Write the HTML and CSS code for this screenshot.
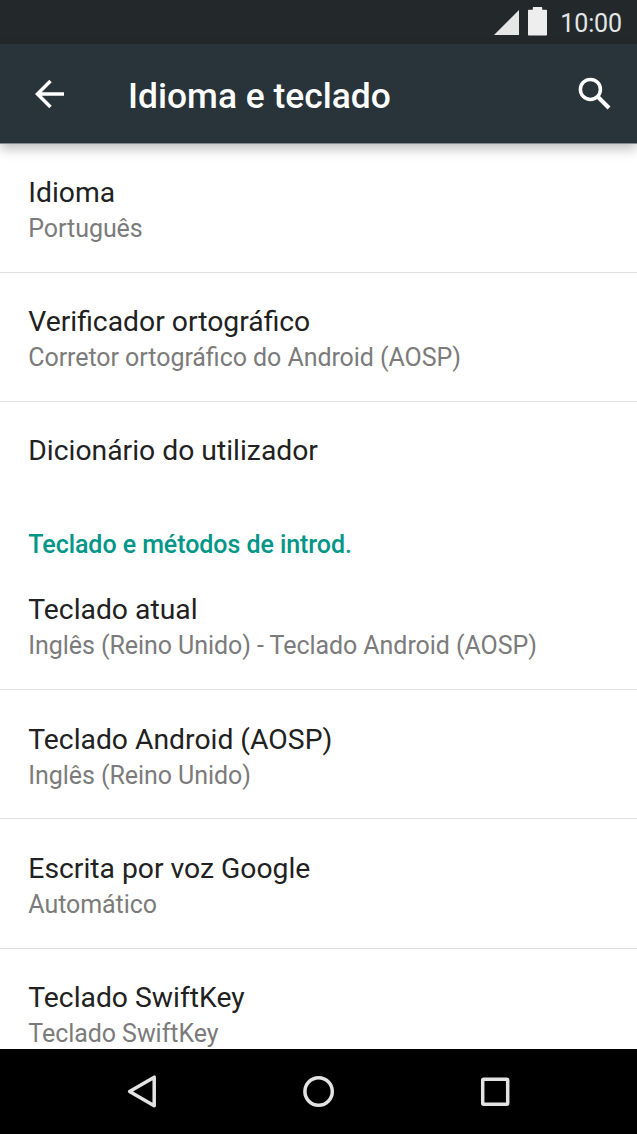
FILE: index.html
```html
<!DOCTYPE html>
<html lang="pt">
<head>
<meta charset="utf-8">
<title>Idioma e teclado</title>
<link rel="stylesheet" href="styles.css">
</head>
<body>
<div class="screen">
  <div class="status-bar">
    <svg class="signal" width="25" height="25" viewBox="0 0 25 25"><path d="M0 25L25 0V25Z" fill="#e6e6e6"/></svg>
    <svg class="battery" width="19" height="29" viewBox="0 0 19 29"><path d="M0 3.5q0-.7.7-.7H4.8V.6q0-.6.6-.6H13.6q.6 0 .6.6V2.8H18.3q.7 0 .7.7V27.8q0 .7-.7.7H.7q-.7 0-.7-.7Z" fill="#eee"/></svg>
    <span class="clock">10:00</span>
  </div>
  <header class="app-bar">
    <svg class="back" width="30" height="30" viewBox="0 0 30 30"><path d="M29 15H3M15.5 2L2.5 15L15.5 28" fill="none" stroke="#fff" stroke-width="3.5"/></svg>
    <h1 class="title">Idioma e teclado</h1>
    <svg class="search" width="34" height="34" viewBox="0 0 34 34" fill="none" stroke="#fff"><circle cx="12.4" cy="12.4" r="10" stroke-width="3.5"/><path d="M19.5 19.5L31 31" stroke-width="4"/></svg>
  </header>
  <main class="list">
    <div class="row"><div class="name">Idioma</div><div class="summary">Português</div></div>
    <div class="row"><div class="name">Verificador ortográfico</div><div class="summary">Corretor ortográfico do Android (AOSP)</div></div>
    <div class="row single"><div class="name">Dicionário do utilizador</div></div>
    <h2 class="category">Teclado e métodos de introd.</h2>
    <div class="row"><div class="name">Teclado atual</div><div class="summary">Inglês (Reino Unido) - Teclado Android (AOSP)</div></div>
    <div class="row"><div class="name">Teclado Android (AOSP)</div><div class="summary">Inglês (Reino Unido)</div></div>
    <div class="row"><div class="name">Escrita por voz Google</div><div class="summary">Automático</div></div>
    <div class="row"><div class="name">Teclado SwiftKey</div><div class="summary">Teclado SwiftKey</div></div>
  </main>
  <nav class="nav-bar">
    <svg width="36" height="36" viewBox="0 0 36 36"><path d="M28.2 3.2V31.8L3.6 17.5Z"/></svg>
    <svg width="36" height="36" viewBox="0 0 36 36"><circle cx="17.6" cy="17.5" r="13.7"/></svg>
    <svg width="36" height="36" viewBox="0 0 36 36"><rect x="5.7" y="5.2" width="25" height="25" rx="1"/></svg>
  </nav>
</div>
</body>
</html>
```
FILE: styles.css
```css
* { box-sizing: border-box; }

body {
  margin: 0;
  font-family: Roboto, "Liberation Sans", sans-serif;
}

.screen {
  width: 637px;
  height: 1134px;
  display: flex;
  flex-direction: column;
  overflow: hidden;
  background: #fff;
}

.status-bar {
  flex: none;
  height: 44px;
  padding: 7px 15px 0 0;
  display: flex;
  justify-content: flex-end;
  align-items: flex-start;
  background: #23282b;
}

.signal { margin: 3px 9px 0 0; }
.battery { margin-right: 13px; }

.clock {
  font-size: 25px;
  letter-spacing: -0.1px;
  line-height: 33px;
  color: #e3e5e6;
}

.app-bar {
  flex: none;
  z-index: 1;
  height: 99px;
  padding: 0 25px 0 35px;
  display: flex;
  align-items: center;
  background: #28333a;
  box-shadow: 0 1px 0 #858a8e, 0 6px 11px rgba(0, 0, 0, .25);
}

.title {
  flex: 1;
  margin: 4px 0 0 63px;
  font-size: 35.4px;
  line-height: 42px;
  font-weight: 500;
  color: #fff;
}

.list {
  flex: 1;
  min-height: 0;
  padding-top: .6px;
  overflow: hidden;
}

.row {
  height: 129.3px;
  padding: 31.4px 28px 0 28.3px;
  border-bottom: 1px solid #e0e0e0;
}

.row.single {
  height: 113px;
  padding-top: 31px;
  border-bottom: 0;
}

.name {
  font-size: 28.3px;
  line-height: 35px;
  color: #212121;
}

.summary {
  font-size: 25px;
  letter-spacing: -0.06px;
  font-feature-settings: "liga";
  line-height: 37px;
  color: #7b7b7b;
}

.category {
  height: 45.7px;
  margin: 0;
  padding: 13px 28px 0 28.3px;
  font-size: 25px;
  letter-spacing: -0.06px;
  line-height: 34px;
  font-weight: 500;
  color: #009688;
}

.nav-bar {
  flex: none;
  height: 85px;
  padding: 0 124.5px 0 125.5px;
  display: flex;
  justify-content: space-between;
  align-items: center;
  background: #000;
}

.nav-bar svg {
  fill: none;
  stroke: #e3e3e3;
  stroke-width: 3.5;
  stroke-linejoin: round;
}
```
